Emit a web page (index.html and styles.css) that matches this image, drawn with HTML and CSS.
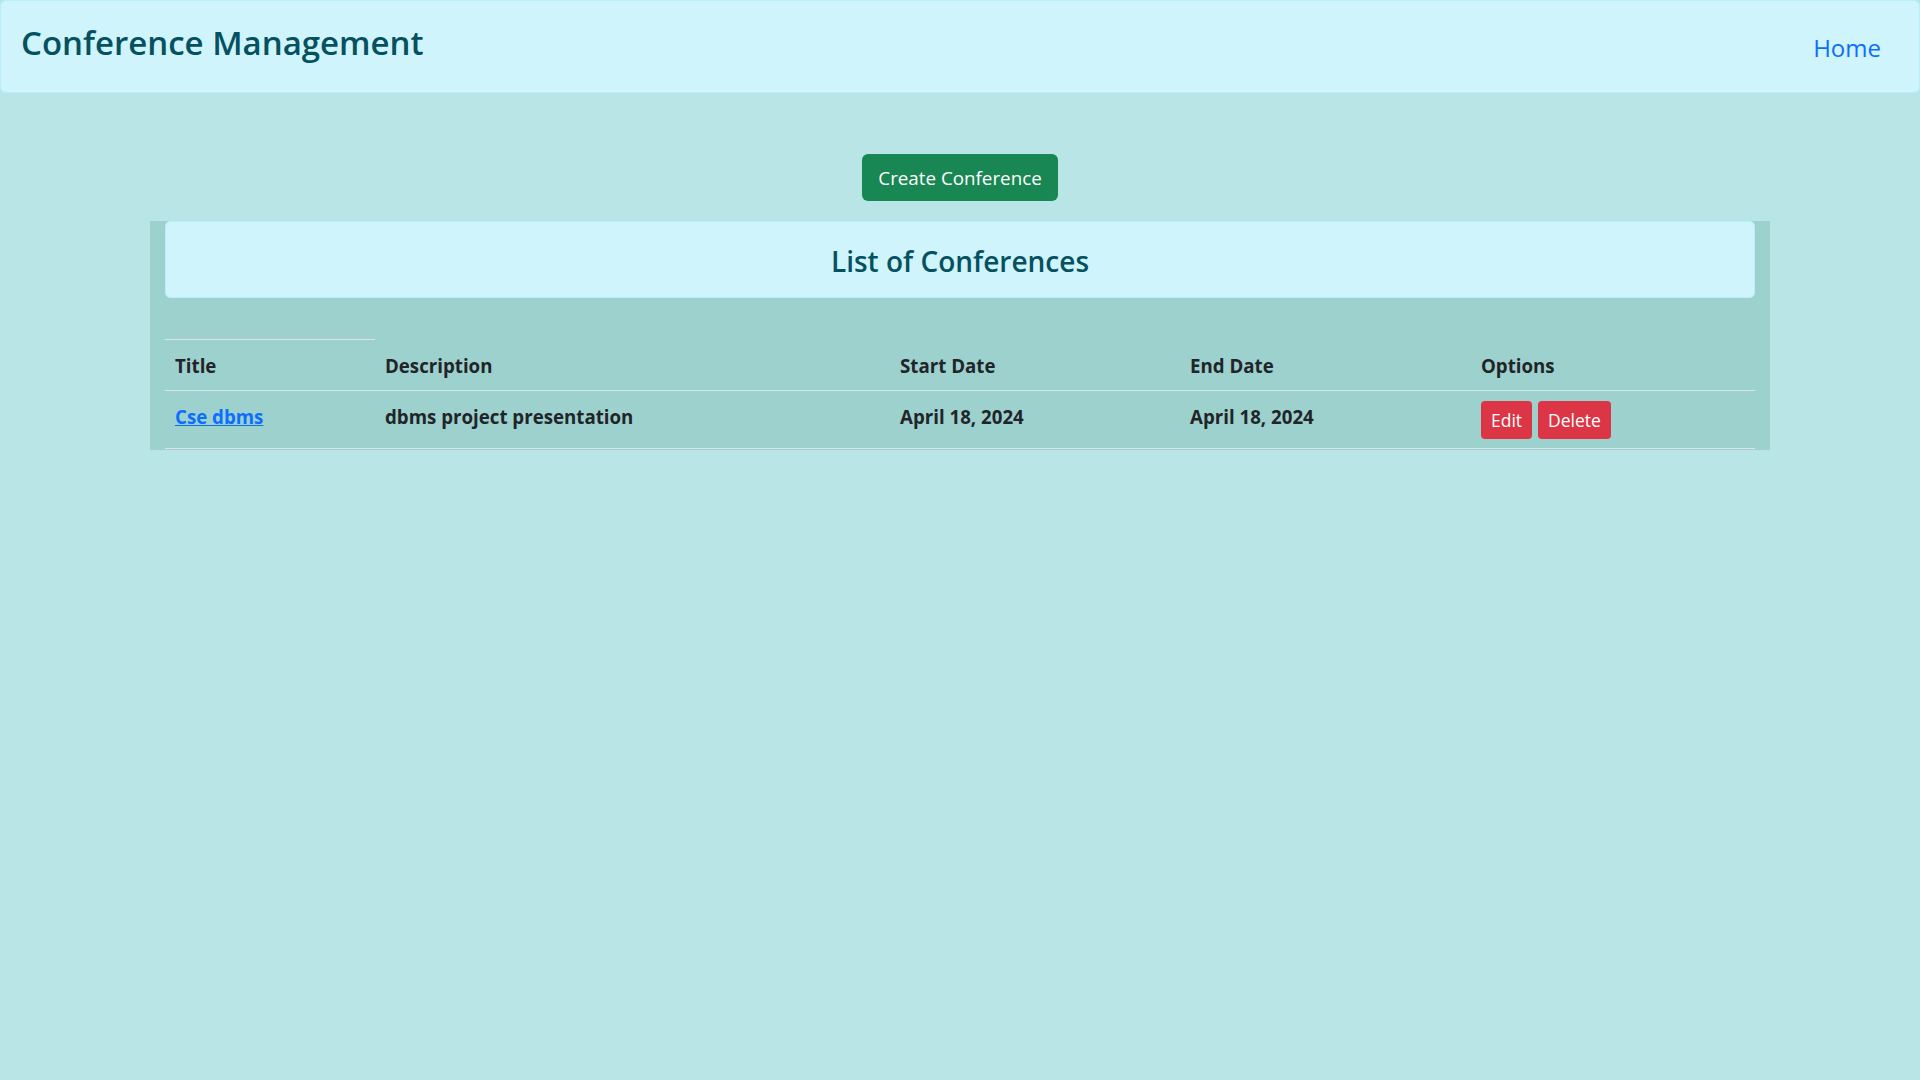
FILE: index.html
```html
<!DOCTYPE html>
<html lang="en">
<head>
<meta charset="utf-8">
<title>Conference Management</title>
<link rel="stylesheet" href="styles.css">
</head>
<body>
<nav class="navbar">
  <span class="brand">Conference Management</span>
  <a class="nav-link" href="#">Home</a>
</nav>
<main class="main">
  <div class="actions">
    <a class="btn btn-success" href="#">Create Conference</a>
  </div>
  <section class="panel">
    <div class="panel-header">
      <h2 class="panel-title">List of Conferences</h2>
    </div>
    <table class="table">
      <thead>
        <tr>
          <th class="col-title">Title</th>
          <th class="col-desc">Description</th>
          <th class="col-start">Start Date</th>
          <th class="col-end">End Date</th>
          <th class="col-opt">Options</th>
        </tr>
      </thead>
      <tbody>
        <tr>
          <td><a class="link" href="#">Cse dbms</a></td>
          <td>dbms project presentation</td>
          <td>April 18, 2024</td>
          <td>April 18, 2024</td>
          <td class="opts"><a class="btn btn-danger" href="#">Edit</a> <a class="btn btn-danger" href="#">Delete</a></td>
        </tr>
      </tbody>
    </table>
  </section>
</main>
</body>
</html>
```
FILE: styles.css
```css
* { box-sizing: border-box; }
html, body { margin: 0; padding: 0; }
body {
  background: #b9e5e6;
  font-family: "Open Sans", "Noto Sans", sans-serif;
  color: #212529;
  min-height: 1080px;
}
.navbar {
  display: flex;
  justify-content: space-between;
  align-items: flex-start;
  height: 93px;
  background: #cff4fc;
  border: 1px solid #b6effb;
  border-radius: 6px;
  padding: 0 38px 0 20px;
}
.brand {
  font-size: 33px;
  font-weight: 600;
  line-height: 1;
  color: #055160;
  padding-top: 25px;
}
.nav-link {
  font-size: 24px;
  line-height: 1;
  color: #0d6efd;
  text-decoration: none;
  padding-top: 35px;
}
.main {
  display: flex;
  flex-direction: column;
  align-items: center;
  padding-top: 61px;
}
.actions {
  margin-bottom: 20px;
}
.btn {
  display: inline-block;
  text-decoration: none;
  color: #fff;
  border-radius: 6px;
}
.btn-success {
  background: #198754;
  font-size: 18.8px;
  height: 47px;
  line-height: 48px;
  width: 196px;
  text-align: center;
}
.panel {
  width: 1620px;
  background: #9dd1ce;
  padding: 0 15px 1px;
}
.panel-header {
  background: #cff4fc;
  border: 1px solid #b6effb;
  border-radius: 5px;
  height: 77px;
  display: flex;
  align-items: center;
  justify-content: center;
  margin-bottom: 41px;
}
.panel-title {
  margin: 0;
  font-weight: 600;
  font-size: 28px;
  color: #055160;
  padding-top: 2px;
}
.table {
  width: 100%;
  border-collapse: collapse;
  font-size: 18.7px;
  font-weight: 700;
}
.table th, .table td {
  text-align: left;
  padding: 0 10px;
  border-bottom: 1px solid #dee2e6;
}
.table th {
  height: 51px;
  vertical-align: middle;
  padding-top: 1px;
}
.table td {
  height: 58px;
  vertical-align: middle;
  padding-bottom: 6px;
}
.table th.col-title { border-top: 1px solid #dee2e6; width: 210px; }
.col-desc { width: 515px; }
.col-start { width: 290px; }
.col-end { width: 291px; }
.link {
  color: #0d6efd;
  text-decoration: underline;
}
.table td.opts { padding-top: 0; padding-bottom: 0; }
.btn-danger {
  background: #dc3545;
  font-weight: 400;
  font-size: 17.5px;
  height: 38px;
  line-height: 38px;
  padding: 0 10px;
  border-radius: 4px;
  margin-right: 1px;
}
```
